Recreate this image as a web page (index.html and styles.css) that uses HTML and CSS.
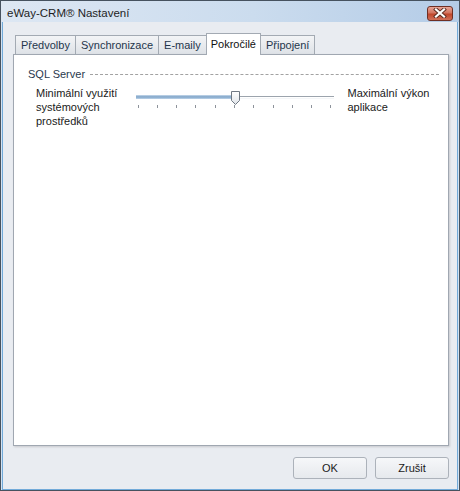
FILE: index.html
```html
<!DOCTYPE html>
<html lang="cs">
<head>
  <meta charset="UTF-8">
  <title>eWay-CRM® Nastavení</title>
  <link rel="stylesheet" href="styles.css">
</head>
<body>

<div class="window">
  <div class="titlebar">
    <span class="title">eWay-CRM® Nastavení</span>
    <div class="close">
      <svg width="14" height="10" viewBox="0 0 14 10">
        <path d="M3 1.5 L11 8.5 M11 1.5 L3 8.5" stroke="#5a2a20" stroke-width="4" stroke-linecap="square"/>
        <path d="M3 1.5 L11 8.5 M11 1.5 L3 8.5" stroke="#fff" stroke-width="2.2" stroke-linecap="square"/>
      </svg>
    </div>
  </div>

  <div class="client">
    <div class="tabs">
      <div class="tab">Předvolby</div>
      <div class="tab">Synchronizace</div>
      <div class="tab">E-maily</div>
      <div class="tab active">Pokročilé</div>
      <div class="tab">Připojení</div>
    </div>

    <div class="panel">
      <div class="group-head">
        <span>SQL Server</span>
        <span class="rule"></span>
      </div>

      <div class="slider-row">
        <div class="lbl-left">Minimální využití systémových prostředků</div>
        <div class="slider">
          <div class="track"><div class="fill" style="width:97px"></div></div>
          <svg class="thumb" width="10" height="15" viewBox="0 0 10 15">
            <defs>
              <linearGradient id="tg" x1="0" y1="0" x2="0" y2="1">
                <stop offset="0" stop-color="#ffffff"/>
                <stop offset="1" stop-color="#dfe3e8"/>
              </linearGradient>
            </defs>
            <path d="M0.5 0.5 H8.5 V9.5 L4.5 13.5 L0.5 9.5 Z" fill="url(#tg)" stroke="#6f7883"/>
          </svg>
          <div class="ticks">
            <i></i><i></i><i></i><i></i><i></i><i></i><i></i><i></i><i></i><i></i><i></i>
          </div>
        </div>
        <div class="lbl-right">Maximální výkon aplikace</div>
      </div>
    </div>

    <div class="buttons">
      <button class="btn">OK</button>
      <button class="btn">Zrušit</button>
    </div>
  </div>
</div>

</body>
</html>
```

FILE: styles.css
```css
body {
  margin: 0;
  font-family: "Liberation Sans", Arial, sans-serif;
  font-size: 11px;
  color: #1a1a1a;
}
.window {
  width: 460px;
  height: 491px;
  box-sizing: border-box;
  border: 1px solid #46525f;
  background: #d2e2f2;
  display: flex;
  flex-direction: column;
}
.titlebar {
  height: 21px;
  box-sizing: border-box;
  padding: 3px 6px 0 6px;
  display: flex;
  align-items: center;
  justify-content: space-between;
  background: linear-gradient(to right, #dde7f3 0%, #cbdcee 55%, #b4cce7 100%);
}
.title {
  font-size: 11.5px;
  color: #1e1e1e;
}
.close {
  width: 26px;
  height: 15px;
  box-sizing: border-box;
  border: 1px solid #6e2f24;
  border-radius: 3px;
  background: linear-gradient(to bottom, #e8a595 0%, #d27460 45%, #c0462b 55%, #d0705a 100%);
  display: flex;
  align-items: center;
  justify-content: center;
}
.client {
  flex: 1;
  margin: 0 1px;
  border: 1px solid #72aad9;
  border-top: 0;
  background: #e9ecf1;
  padding: 11px 8px 10px 10px;
  display: flex;
  flex-direction: column;
}
.tabs {
  height: 21px;
  display: flex;
  align-items: flex-end;
  padding-left: 2px;
}
.tab {
  height: 19px;
  box-sizing: border-box;
  padding: 0 5px;
  line-height: 18px;
  border: 1px solid #a3aab3;
  border-bottom: 0;
  margin-right: -1px;
  background: linear-gradient(to bottom, #f3f4f6, #dee2e7);
  color: #24364c;
  white-space: nowrap;
}
.tab.active {
  height: 22px;
  margin-bottom: -1px;
  padding: 0 4px;
  line-height: 20px;
  background: #fff;
  color: #111;
  position: relative;
  z-index: 1;
}
.panel {
  flex: 1;
  background: #fff;
  border: 1px solid #a0a7b1;
  box-shadow: 1px 1px 2px rgba(0,0,0,0.15);
  padding: 12px 9px 0 14px;
}
.group-head {
  display: flex;
  align-items: center;
  gap: 5px;
  line-height: 14px;
  color: #2a3a4e;
}
.rule {
  flex: 1;
  border-top: 1px dashed #a2a2a2;
}
.slider-row {
  display: flex;
  align-items: flex-start;
  margin-top: 5px;
  padding-left: 8px;
  line-height: 14px;
}
.lbl-left {
  width: 96px;
}
.lbl-right {
  width: 92px;
  margin-left: 13px;
}
.slider {
  width: 200px;
  height: 18px;
  margin: 5px 0 0 4px;
  position: relative;
}
.track {
  height: 1px;
  margin-top: 5px;
  border-top: 1px solid #9ca4ad;
  border-bottom: 1px solid #f4f6f8;
  position: relative;
}
.fill {
  position: absolute;
  left: 0;
  top: -2px;
  height: 4px;
  background: linear-gradient(to bottom, #c4d7ea, #7aa2c8 50%, #bcd2e8);
  opacity: 0.95;
}
.thumb {
  position: absolute;
  left: 95px;
  top: 0;
}
.ticks {
  display: flex;
  justify-content: space-between;
  padding: 0 3px 0 2px;
  margin-top: 6px;
}
.ticks i {
  width: 1px;
  height: 3px;
  background: #8d939b;
}
.buttons {
  display: flex;
  justify-content: flex-end;
  gap: 8px;
  margin-top: 11px;
}
.btn {
  width: 74px;
  height: 22px;
  border: 1px solid #acb2ba;
  border-radius: 3px;
  background: linear-gradient(to bottom, #f6f7f9, #e6e9ed);
  font-family: "Liberation Sans", Arial, sans-serif;
  font-size: 11px;
  color: #1a1a1a;
  padding: 0;
}
```
